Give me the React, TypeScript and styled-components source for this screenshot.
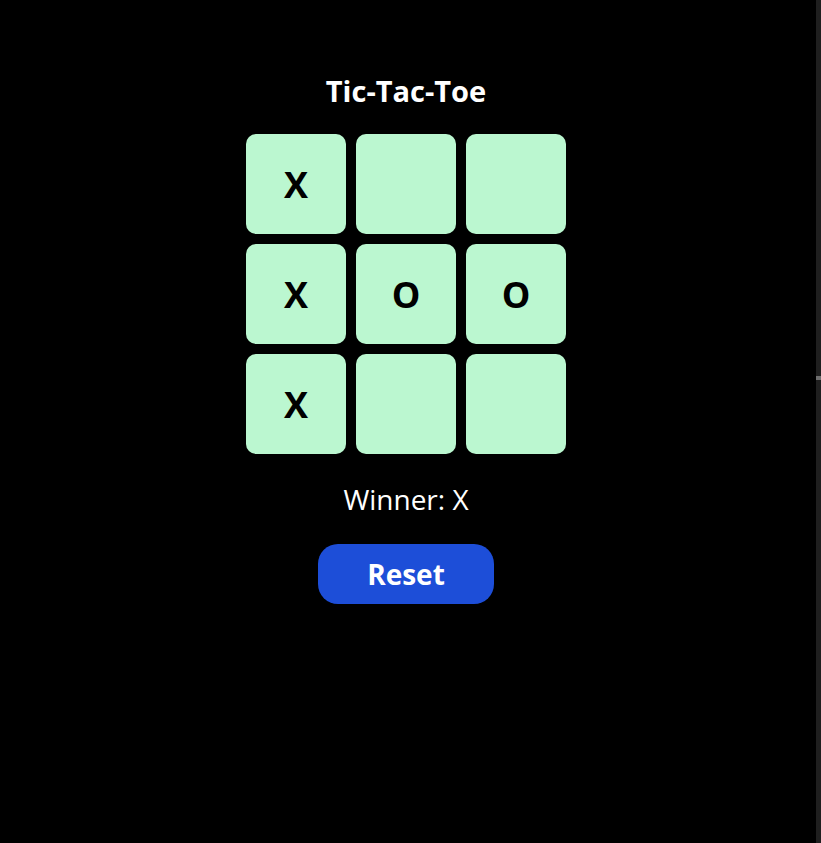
import React, { useState } from "react";
import styled, { createGlobalStyle } from "styled-components";

const Global = createGlobalStyle`
  html, body { margin: 0; padding: 0; background: #000; }
  body { font-family: "Open Sans", "Noto Sans", "Liberation Sans", sans-serif; color: #fff; }
`;

const Shell = styled.div`
  display: flex;
  height: 843px;
  background: #000;
`;

const Main = styled.main`
  flex: 1;
  display: flex;
  flex-direction: column;
  align-items: center;
  padding: 72px 4px 0 0;
`;

const Splitter = styled.div`
  position: relative;
  width: 5px;
  background: #1f1f1f;
`;

const Handle = styled.div`
  position: absolute;
  left: 0;
  top: 376px;
  width: 5px;
  height: 4px;
  background: #6e6e6e;
`;

const Title = styled.h1`
  margin: 0 0 24px;
  font-size: 29px;
  line-height: 38px;
  font-weight: 700;
  color: #fff;
`;

const Board = styled.div`
  display: grid;
  grid-template-columns: repeat(3, 100px);
  grid-auto-rows: 100px;
  gap: 10px;
`;

const Cell = styled.button`
  border: none;
  border-radius: 10px;
  background: #bbf7d0;
  color: #000;
  font-family: inherit;
  font-size: 36px;
  font-weight: 700;
  display: flex;
  align-items: center;
  justify-content: center;
  padding: 0 0 0 0;
  cursor: pointer;
`;

const Status = styled.p`
  margin: 26px 0 0;
  font-size: 28px;
  line-height: 38px;
  color: #fff;
`;

const ResetButton = styled.button`
  margin-top: 26px;
  width: 176px;
  height: 60px;
  border: none;
  border-radius: 20px;
  background: #1d4ed8;
  color: #fff;
  font-family: inherit;
  font-size: 28px;
  font-weight: 700;
  cursor: pointer;
`;

const initial = ["X", "", "", "X", "O", "O", "X", "", ""];

export default function App() {
  const [cells] = useState<string[]>(initial);
  return (
    <>
      <Global />
      <Shell>
        <Main>
          <Title>Tic-Tac-Toe</Title>
          <Board>
            {cells.map((c, i) => (
              <Cell key={i}>{c}</Cell>
            ))}
          </Board>
          <Status>Winner: X</Status>
          <ResetButton>Reset</ResetButton>
        </Main>
        <Splitter>
          <Handle />
        </Splitter>
      </Shell>
    </>
  );
}
